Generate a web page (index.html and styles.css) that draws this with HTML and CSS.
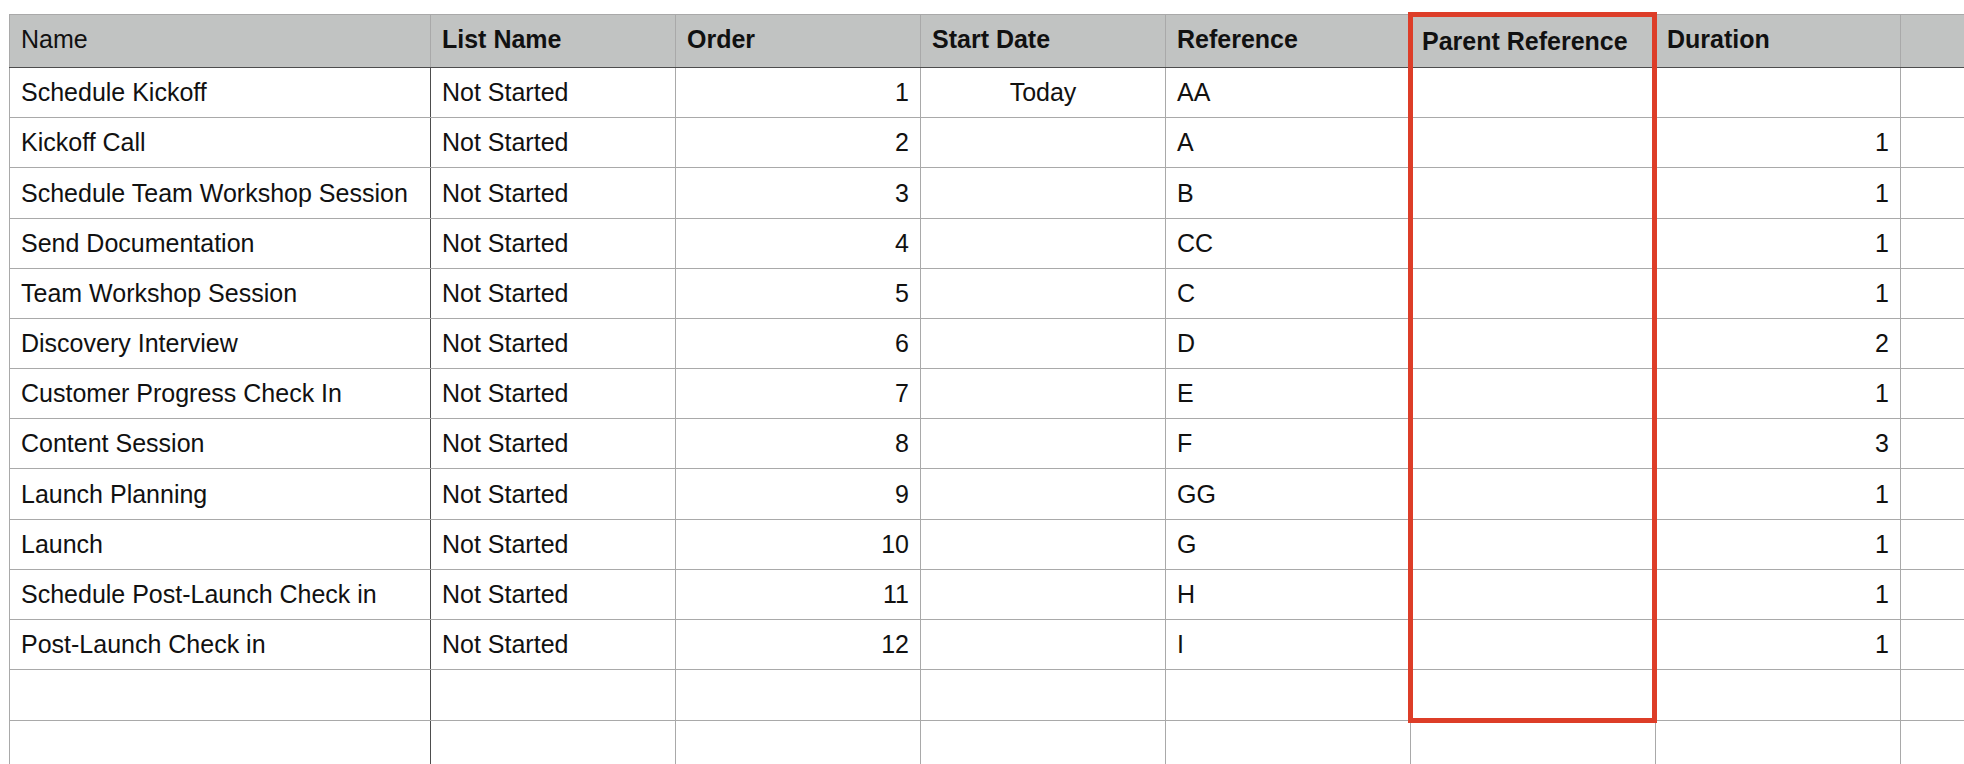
FILE: index.html
```html
<!DOCTYPE html>
<html>
<head>
<meta charset="utf-8">
<link rel="stylesheet" href="styles.css">
</head>
<body>
<div class="sheet">
  <table class="grid">
    <colgroup>
      <col class="c-name"><col class="c-std"><col class="c-std"><col class="c-std"><col class="c-std"><col class="c-std"><col class="c-std"><col class="c-std">
    </colgroup>
    <thead>
      <tr>
        <th class="first regular">Name</th>
        <th>List Name</th>
        <th>Order</th>
        <th>Start Date</th>
        <th>Reference</th>
        <th class="parent">Parent Reference</th>
        <th>Duration</th>
        <th></th>
      </tr>
    </thead>
    <tbody>
      <tr><td class="first">Schedule Kickoff</td><td>Not Started</td><td class="num">1</td><td class="center">Today</td><td>AA</td><td></td><td class="num"></td><td></td></tr>
      <tr><td class="first">Kickoff Call</td><td>Not Started</td><td class="num">2</td><td></td><td>A</td><td></td><td class="num">1</td><td></td></tr>
      <tr class="tall"><td class="first">Schedule Team Workshop Session</td><td>Not Started</td><td class="num">3</td><td></td><td>B</td><td></td><td class="num">1</td><td></td></tr>
      <tr><td class="first">Send Documentation</td><td>Not Started</td><td class="num">4</td><td></td><td>CC</td><td></td><td class="num">1</td><td></td></tr>
      <tr><td class="first">Team Workshop Session</td><td>Not Started</td><td class="num">5</td><td></td><td>C</td><td></td><td class="num">1</td><td></td></tr>
      <tr><td class="first">Discovery Interview</td><td>Not Started</td><td class="num">6</td><td></td><td>D</td><td></td><td class="num">2</td><td></td></tr>
      <tr><td class="first">Customer Progress Check In</td><td>Not Started</td><td class="num">7</td><td></td><td>E</td><td></td><td class="num">1</td><td></td></tr>
      <tr><td class="first">Content Session</td><td>Not Started</td><td class="num">8</td><td></td><td>F</td><td></td><td class="num">3</td><td></td></tr>
      <tr class="tall"><td class="first">Launch Planning</td><td>Not Started</td><td class="num">9</td><td></td><td>GG</td><td></td><td class="num">1</td><td></td></tr>
      <tr><td class="first">Launch</td><td>Not Started</td><td class="num">10</td><td></td><td>G</td><td></td><td class="num">1</td><td></td></tr>
      <tr><td class="first">Schedule Post-Launch Check in</td><td>Not Started</td><td class="num">11</td><td></td><td>H</td><td></td><td class="num">1</td><td></td></tr>
      <tr><td class="first">Post-Launch Check in</td><td>Not Started</td><td class="num">12</td><td></td><td>I</td><td></td><td class="num">1</td><td></td></tr>
      <tr class="tall"><td class="first"></td><td></td><td></td><td></td><td></td><td></td><td></td><td></td></tr>
      <tr><td class="first"></td><td></td><td></td><td></td><td></td><td></td><td></td><td></td></tr>
    </tbody>
  </table>
  <div class="highlight"></div>
</div>
</body>
</html>
```

FILE: styles.css
```css
html, body {
  margin: 0;
  padding: 0;
  background: #ffffff;
  overflow: hidden;
}

body {
  width: 1964px;
  height: 764px;
  font-family: "Liberation Sans", Arial, Helvetica, sans-serif;
  color: #111111;
}

.sheet {
  position: relative;
  padding: 14px 0 0 9px;
  width: 2200px;
}

.grid {
  border-collapse: collapse;
  table-layout: fixed;
  width: 1962px;
  font-size: 25px;
}

.c-name { width: 421px; }
.c-std { width: 245px; }

.grid th,
.grid td {
  border: 1px solid #a9a9a9;
  padding: 0 11px 0 11px;
  white-space: nowrap;
  overflow: hidden;
  text-align: left;
  vertical-align: middle;
}

.grid th {
  background: #c1c3c2;
  height: 48px;
  font-weight: bold;
  padding-bottom: 4px;
  border-bottom: 1px solid #4d4d4d;
}

.grid th.regular {
  font-weight: normal;
}

.grid th.parent {
  padding-top: 2px;
  padding-bottom: 2px;
}

.grid td {
  height: 49px;
}

.grid tr.tall td {
  height: 50px;
}

.grid tbody td.first {
  border-right: 1px solid #4d4d4d;
}

.grid td.num {
  text-align: right;
}

.grid td.center {
  text-align: center;
}

.highlight {
  position: absolute;
  left: 1408px;
  top: 12px;
  width: 239px;
  height: 701px;
  border: 5px solid #dd3d28;
  pointer-events: none;
}
```
